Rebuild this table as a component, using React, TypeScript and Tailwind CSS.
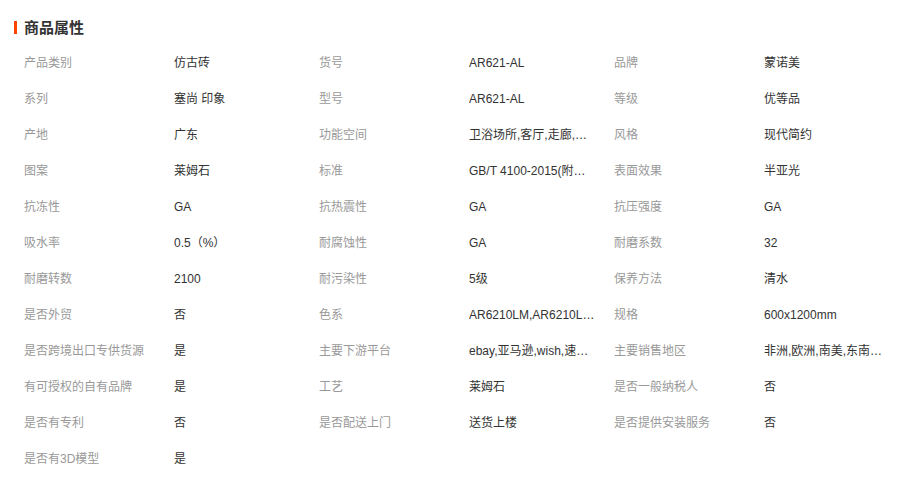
import * as React from "react"

type Attr = { label: string; value: string }

const attrs: Attr[] = [
  { label: "产品类别", value: "仿古砖" },
  { label: "货号", value: "AR621-AL" },
  { label: "品牌", value: "蒙诺美" },
  { label: "系列", value: "塞尚 印象" },
  { label: "型号", value: "AR621-AL" },
  { label: "等级", value: "优等品" },
  { label: "产地", value: "广东" },
  { label: "功能空间", value: "卫浴场所,客厅,走廊,阳台,厨房,卧室" },
  { label: "风格", value: "现代简约" },
  { label: "图案", value: "莱姆石" },
  { label: "标准", value: "GB/T 4100-2015(附录G)" },
  { label: "表面效果", value: "半亚光" },
  { label: "抗冻性", value: "GA" },
  { label: "抗热震性", value: "GA" },
  { label: "抗压强度", value: "GA" },
  { label: "吸水率", value: "0.5（%）" },
  { label: "耐腐蚀性", value: "GA" },
  { label: "耐磨系数", value: "32" },
  { label: "耐磨转数", value: "2100" },
  { label: "耐污染性", value: "5级" },
  { label: "保养方法", value: "清水" },
  { label: "是否外贸", value: "否" },
  { label: "色系", value: "AR6210LM,AR6210LMA,AR6210LMB" },
  { label: "规格", value: "600x1200mm" },
  { label: "是否跨境出口专供货源", value: "是" },
  { label: "主要下游平台", value: "ebay,亚马逊,wish,速卖通" },
  { label: "主要销售地区", value: "非洲,欧洲,南美,东南亚,北美" },
  { label: "有可授权的自有品牌", value: "是" },
  { label: "工艺", value: "莱姆石" },
  { label: "是否一般纳税人", value: "否" },
  { label: "是否有专利", value: "否" },
  { label: "是否配送上门", value: "送货上楼" },
  { label: "是否提供安装服务", value: "否" },
  { label: "是否有3D模型", value: "是" },
]

export default function App() {
  return (
    <div
      className="w-[917px] h-[483px] bg-white overflow-hidden"
      style={{ fontFamily: '"Liberation Sans", "Noto Sans CJK SC", sans-serif' }}
    >
      {/* Section title */}
      <div className="flex items-center h-[27px] mt-[14px] pl-[14px]">
        <span className="w-[3px] h-[13px] bg-[#ff4400]" />
        <h2 className="ml-[7px] text-[15px] font-bold text-[#333] leading-none">商品属性</h2>
      </div>

      {/* Attribute table */}
      <div className="grid grid-cols-[295px_295px_295px] pl-6 mt-[4px]">
        {attrs.map((a) => (
          <div key={a.label} className="flex items-center h-9 text-xs overflow-hidden">
            <span className="w-[150px] shrink-0 text-[#999] whitespace-nowrap">{a.label}</span>
            <span className="w-[128px] text-[#333] truncate">{a.value}</span>
          </div>
        ))}
      </div>
    </div>
  )
}
